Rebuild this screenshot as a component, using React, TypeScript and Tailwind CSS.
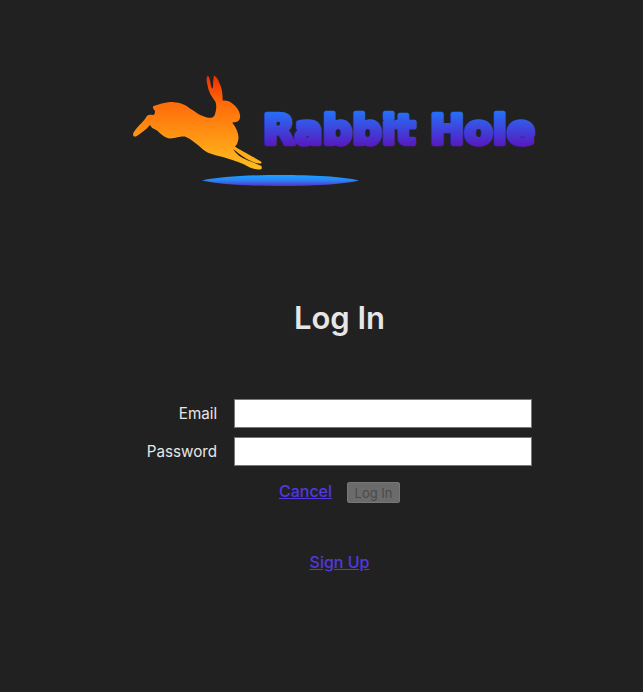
export default function App() {
  return (
    <div className="min-h-[692px] bg-[#212121] pl-9 flex flex-col items-center font-['Inter',sans-serif] text-[16px] text-[#e6e6e6]">
      <svg className="mt-[60px] -ml-[9px] shrink-0" width="430" height="135" viewBox="120 60 430 135">
        <defs>
          <linearGradient id="rabbit" x1="0" y1="0" x2="0" y2="1">
            <stop offset="0" stopColor="#ee2c00" />
            <stop offset="0.3" stopColor="#ff6c0a" />
            <stop offset="1" stopColor="#ffbe1e" />
          </linearGradient>
          <linearGradient id="title" gradientUnits="userSpaceOnUse" x1="0" y1="107" x2="0" y2="148">
            <stop offset="0" stopColor="#1f7bff" />
            <stop offset="1" stopColor="#5a14bd" />
          </linearGradient>
          <linearGradient id="hole" x1="0" y1="0" x2="0" y2="1">
            <stop offset="0" stopColor="#1ea2ff" />
            <stop offset="0.5" stopColor="#2a82f4" />
            <stop offset="1" stopColor="#5a2fc8" />
          </linearGradient>
        </defs>
        <path
          fill="url(#rabbit)"
          d="M208 75.5C210 78 210.5 83 211 86C212 89 212.5 89 213 87C213 83 213.5 77 214 75.5C217 77 219 81 221 87C222.5 91 222.5 96 222.7 100.5C226 100 230 101 233 104C237 107 239.5 111 240 115C240.5 118 239.5 121 236 122C234 122.5 232 122 232.5 123C236 127 238 132 238.5 137C238.5 141 237 145 235 146.500C240 150 250 155 261 161.500C262 163 261.500 164 260 163.500C256 163.500 252 162 246 158.500C240 155 236 151 233 149C236 154 241 158 248 160.500C253 162 257 164 261.500 166C262 168 262 169 260 169.500C257 170 252 168.500 248 166.500C242 163 235 161 226 158C218 155.500 208 154 203 149.500C197 144 191 139 185 136.500C180 136 177 138 170 138.500C165 138 161 134 157 130.500C154 128.500 151 128 150.500 125.500L150 125C146 130 141 133 136 136.500C133.500 137 132.500 136 133.500 132.500C137 127 141 124 145 119C147 115 148 114 153 115C155 115 155 112 155 111C153.500 109 152 107.500 153.500 106C158 104.500 163 103 170 102C178 102 185 104 190 108.500C197 113 201 116 207 117.500C211 118 213 118 214.500 115.500C216.500 110 217 105 215 101C212 97 208.500 92 207.500 85C206 80 206.500 77 208 75.500Z"
        />
        <path fill="url(#hole)" d="M202 180.500C220 176.500 250 175 281 175C312 175 342 176.500 359 180.500C342 184.500 312 186 281 186C250 186 220 184.500 202 180.500Z" />
        <text
          x="263"
          y="143.500"
          fill="url(#title)"
          stroke="url(#title)"
          strokeWidth="4.5"
          strokeLinejoin="round"
          fontFamily="'DejaVu Sans', sans-serif"
          fontWeight="700"
          fontSize="41"
          textLength="272"
          lengthAdjust="spacingAndGlyphs"
        >
          Rabbit Hole
        </text>
      </svg>
      <h1 className="mt-[104px] text-[31px] leading-[38px] font-semibold text-[#e6e6e6]">Log In</h1>
      <form className="mt-[62px] flex flex-col items-center">
        <div className="grid grid-cols-[auto_auto] items-center gap-x-[17px] gap-y-[9px]">
          <label className="text-right text-[15.2px] leading-[19px]">Email</label>
          <input type="email" className="w-[298px] h-[29px] bg-white border border-[#767676]" />
          <label className="text-right text-[15.2px] leading-[19px]">Password</label>
          <input type="password" className="w-[298px] h-[29px] bg-white border border-[#767676]" />
        </div>
        <div className="mt-[15px] flex items-center gap-[15px]">
          <a href="#" className="mb-[3px] underline font-medium text-[#5238e0] leading-[20px]">Cancel</a>
          <button type="button" disabled className="w-[53px] h-[21px] rounded-[2px] bg-[#6b6b6b] border border-[#767676] text-[13px] leading-[16px] text-[#4a4a4a] text-center">Log In</button>
        </div>
      </form>
      <a href="#" className="mt-[48px] underline font-medium text-[#5238e0] leading-[20px]">Sign Up</a>
    </div>
  );
}
